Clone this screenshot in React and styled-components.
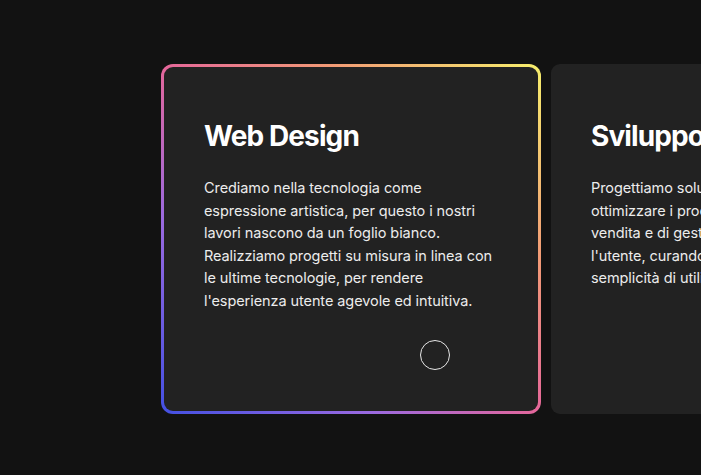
import styled, { createGlobalStyle } from "styled-components";

const GlobalStyle = createGlobalStyle`
	html, body {
		margin: 0;
		padding: 0;
		background: #121212;
		overflow: hidden;
	}
	body {
		font-family: Inter, "Liberation Sans", sans-serif;
		-webkit-font-smoothing: antialiased;
	}
`;

const Section = styled.section`
	width: 701px;
	height: 475px;
	overflow: hidden;
	background: #121212;
`;

const Track = styled.div`
	display: flex;
	gap: 10px;
	padding: 64px 0 0 161px;
`;

const Card = styled.article`
	position: relative;
	flex: 0 0 380px;
	min-width: 0;
	height: 350px;
	box-sizing: border-box;
	border-radius: 12px;
	padding: ${(p) => (p.$active ? "3px" : "0")};
	background: ${(p) =>
		p.$active
			? "linear-gradient(to top right, #4350e2 0%, #9b6ae0 28%, #e5679a 50%, #f29a76 72%, #f6ef6c 100%)"
			: "#222222"};
`;

const Inner = styled.div`
	height: 100%;
	box-sizing: border-box;
	border-radius: 9px;
	background: #222222;
	padding: ${(p) => (p.$active ? "52px 40px 0" : "55px 40px 0")};
`;

const Title = styled.h2`
	margin: 0 0 24px;
	font-size: 28px;
	line-height: 34px;
	font-weight: 700;
	letter-spacing: -0.9px;
	color: #ffffff;
	white-space: nowrap;
`;

const Text = styled.p`
	margin: 0;
	font-size: 14.5px;
	line-height: 22.5px;
	letter-spacing: -0.08px;
	color: #ececec;
`;

const Cursor = styled.span`
	position: absolute;
	left: 259px;
	top: 276px;
	width: 30px;
	height: 30px;
	box-sizing: border-box;
	border: 1px solid #e6e6e6;
	border-radius: 50%;
`;

const services = [
	{
		title: "Web Design",
		text: "Crediamo nella tecnologia come espressione artistica, per questo i nostri lavori nascono da un foglio bianco. Realizziamo progetti su misura in linea con le ultime tecnologie, per rendere l'esperienza utente agevole ed intuitiva.",
		active: true,
	},
	{
		title: "Sviluppo Software",
		text: "Progettiamo soluzioni gestionali per ottimizzare i procedimenti aziendali, di vendita e di gestione, mettendo al centro l'utente, curandone l'esperienza e la semplicità di utilizzo.",
	},
];

export default function App() {
	return (
		<>
			<GlobalStyle />
			<Section>
				<Track>
					{services.map((s) => (
						<Card key={s.title} $active={s.active}>
							<Inner $active={s.active}>
								<Title>{s.title}</Title>
								<Text>{s.text}</Text>
							</Inner>
							{s.active && <Cursor />}
						</Card>
					))}
				</Track>
			</Section>
		</>
	);
}
